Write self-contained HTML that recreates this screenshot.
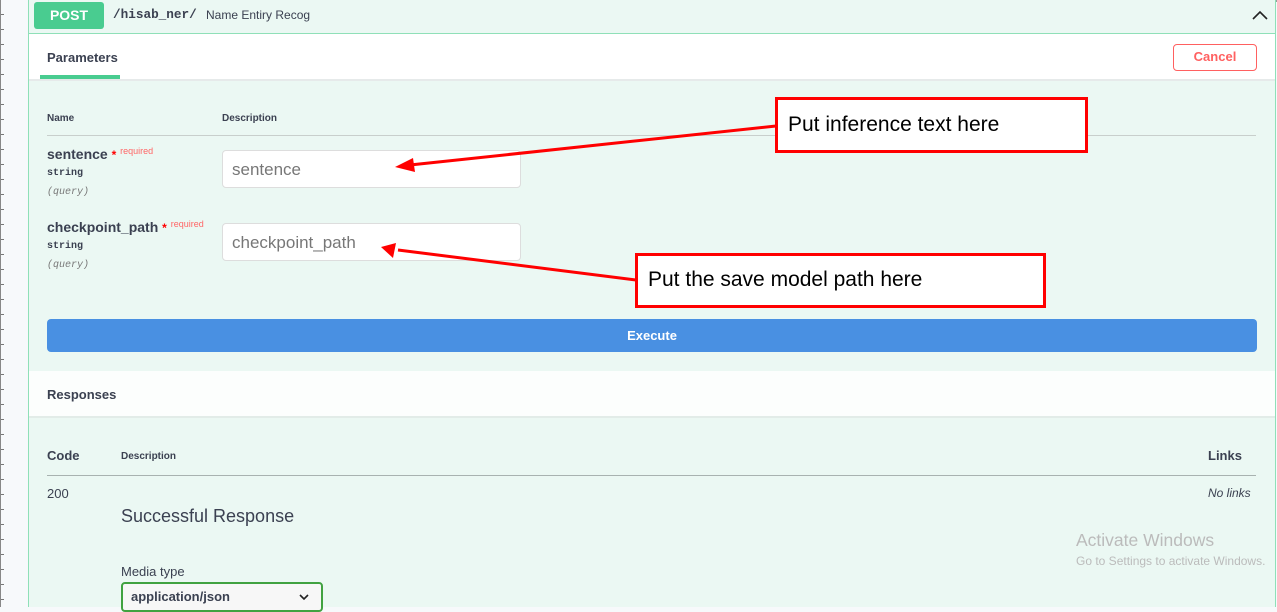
<!DOCTYPE html>
<html><head><style>
*{margin:0;padding:0;box-sizing:border-box}
body{width:1277px;height:607px;overflow:hidden;background:#f7f9fb;font-family:"Liberation Sans",sans-serif;color:#3b4151;position:relative}
.abs{position:absolute}
.ticks{left:0;top:0;width:4px;height:607px;border-left:1px solid #888;background:repeating-linear-gradient(to bottom,transparent 0 14px,#777 14px 15px)}
.panel{left:28px;top:0;width:1248px;height:607px;background:#ebf8f3;border-left:1px solid #8fe0b8;border-right:1px solid #8fe0b8}
.b{font-weight:bold}
</style></head><body>
<div class="abs ticks"></div>
<div class="abs" style="left:28px;top:0;width:1249px;height:2px;background:#999"></div>
<div class="abs panel"></div>
<div class="abs" style="left:34px;top:2px;width:70px;height:27px;background:#49cc90;border-radius:3px;color:#fff;font-weight:bold;font-size:14px;text-align:center;line-height:27px">POST</div>
<div class="abs" style="left:113px;top:7px;font-family:'Liberation Mono',monospace;font-weight:bold;font-size:12.7px;color:#3b4151">/hisab_ner/</div>
<div class="abs" style="left:206px;top:8px;font-size:12px;color:#3b4151">Name Entiry Recog</div>
<svg class="abs" style="left:1251px;top:9px" width="18" height="12"><path d="M2 10 L9 3 L16 10" fill="none" stroke="#222" stroke-width="1.6"/></svg>
<div class="abs" style="left:29px;top:33px;width:1246px;height:1px;background:#8fe0b8"></div>
<div class="abs" style="left:29px;top:34px;width:1246px;height:47px;background:#fff;border-bottom:2px solid #e6eaea"></div>
<div class="abs b" style="left:47px;top:50px;font-size:13px">Parameters</div>
<div class="abs" style="left:40px;top:75px;width:80px;height:4px;background:#49cc90"></div>
<div class="abs" style="left:1173px;top:44px;width:84px;height:27px;border:1.5px solid #ff6060;border-radius:4px;background:#fff;color:#ff6060;font-weight:bold;font-size:13px;text-align:center;line-height:24px">Cancel</div>
<div class="abs b" style="left:47px;top:113px;font-size:10px">Name</div>
<div class="abs b" style="left:222px;top:113px;font-size:10px">Description</div>
<div class="abs" style="left:47px;top:135px;width:1209px;height:1px;background:#c8cfcc"></div>
<div class="abs b" style="left:47px;top:146px;font-size:14px">sentence <span style="color:#f00;font-size:12px">*</span> <span style="color:#f66;font-size:9px;font-weight:normal;vertical-align:5px">required</span></div>
<div class="abs b" style="left:47px;top:168px;font-size:10px;font-family:'Liberation Mono',monospace">string</div>
<div class="abs" style="left:47px;top:187px;font-size:10px;font-style:italic;color:#777;font-family:'Liberation Mono',monospace">(query)</div>
<div class="abs" style="left:222px;top:150px;width:299px;height:38px;background:#fff;border:1px solid #ddd;border-radius:4px;font-size:17px;color:#777;padding:9px 9px">sentence</div>
<div class="abs b" style="left:47px;top:219px;font-size:14px">checkpoint_path <span style="color:#f00;font-size:12px">*</span> <span style="color:#f66;font-size:9px;font-weight:normal;vertical-align:5px">required</span></div>
<div class="abs b" style="left:47px;top:241px;font-size:10px;font-family:'Liberation Mono',monospace">string</div>
<div class="abs" style="left:47px;top:260px;font-size:10px;font-style:italic;color:#777;font-family:'Liberation Mono',monospace">(query)</div>
<div class="abs" style="left:222px;top:223px;width:299px;height:38px;background:#fff;border:1px solid #ddd;border-radius:4px;font-size:17px;color:#777;padding:9px 9px">checkpoint_path</div>
<div class="abs" style="left:47px;top:319px;width:1210px;height:33px;background:#4990e2;border-radius:4px;color:#fff;font-weight:bold;font-size:13px;text-align:center;line-height:33px">Execute</div>
<div class="abs" style="left:29px;top:371px;width:1246px;height:47px;background:#fcfefd;border-bottom:2px solid #e2ece8"></div>
<div class="abs b" style="left:47px;top:387px;font-size:13px">Responses</div>
<div class="abs b" style="left:47px;top:448px;font-size:13px">Code</div>
<div class="abs b" style="left:121px;top:451px;font-size:10px">Description</div>
<div class="abs b" style="left:1208px;top:448px;font-size:13px">Links</div>
<div class="abs" style="left:47px;top:475px;width:1209px;height:1px;background:#a8b2b0"></div>
<div class="abs" style="left:47px;top:486px;font-size:13px">200</div>
<div class="abs" style="left:1208px;top:486px;font-size:12px;font-style:italic">No links</div>
<div class="abs" style="left:121px;top:506px;font-size:18px">Successful Response</div>
<div class="abs" style="left:121px;top:564px;font-size:13px">Media type</div>
<div class="abs" style="left:121px;top:582px;width:202px;height:30px;border:2px solid #41a241;border-radius:4px;background:#f7f7f7;font-weight:bold;font-size:13px;padding:5px 8px">application/json<svg style="position:absolute;right:12px;top:10px" width="10" height="7"><path d="M1 1 L5 5 L9 1" fill="none" stroke="#222" stroke-width="1.6"/></svg></div>
<div class="abs" style="left:1076px;top:530px;font-size:17.5px;color:#bbb">Activate Windows</div>
<div class="abs" style="left:1076px;top:554px;font-size:12px;color:#bbb;white-space:nowrap">Go to Settings to activate Windows.</div>
<div class="abs" style="left:775px;top:97px;width:313px;height:56px;border:3px solid #f00;background:#fff"></div>
<div class="abs" style="left:788px;top:113px;font-size:21px;color:#000">Put inference text here</div>
<div class="abs" style="left:635px;top:253px;width:411px;height:55px;border:3px solid #f00;background:#fff"></div>
<div class="abs" style="left:648px;top:268px;font-size:21px;color:#000">Put the save model path here</div>
<svg class="abs" style="left:0;top:0" width="1277" height="607">
<line x1="776" y1="126" x2="410" y2="165" stroke="#f00" stroke-width="3"/>
<polygon points="395,167 413,158 415,172" fill="#f00"/>
<line x1="636" y1="280" x2="398" y2="250" stroke="#f00" stroke-width="3"/>
<polygon points="381,247 396,243 393,258" fill="#f00"/>
</svg>
</body></html>
